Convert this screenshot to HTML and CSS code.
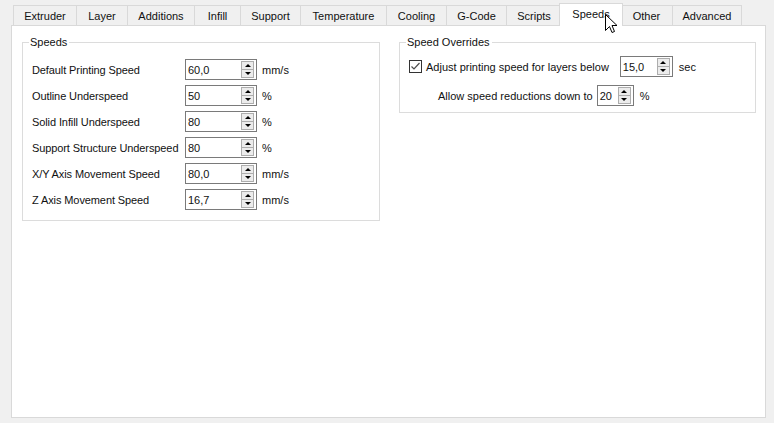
FILE: index.html
```html
<!DOCTYPE html>
<html>
<head>
<meta charset="utf-8">
<link rel="stylesheet" href="styles.css">
</head>
<body>
<div class="window">
  <div class="tabbar">
    <div class="tab w-extruder">Extruder</div>
    <div class="tab w-layer">Layer</div>
    <div class="tab w-additions">Additions</div>
    <div class="tab w-infill">Infill</div>
    <div class="tab w-support">Support</div>
    <div class="tab w-temperature">Temperature</div>
    <div class="tab w-cooling">Cooling</div>
    <div class="tab w-gcode">G-Code</div>
    <div class="tab w-scripts">Scripts</div>
    <div class="tab tab-active w-speeds">Speeds</div>
    <div class="tab w-other">Other</div>
    <div class="tab w-advanced">Advanced</div>
  </div>
  <div class="pane">
    <fieldset class="group group-left">
      <legend>Speeds</legend>
      <div class="form-grid">
        <span class="label">Default Printing Speed</span>
        <div class="spin spin-wide"><span class="value">60,0</span><span class="spin-btn"><span class="arrow-up"></span><span class="arrow-down"></span></span></div>
        <span class="unit">mm/s</span>

        <span class="label">Outline Underspeed</span>
        <div class="spin spin-wide"><span class="value">50</span><span class="spin-btn"><span class="arrow-up"></span><span class="arrow-down"></span></span></div>
        <span class="unit">%</span>

        <span class="label">Solid Infill Underspeed</span>
        <div class="spin spin-wide"><span class="value">80</span><span class="spin-btn"><span class="arrow-up"></span><span class="arrow-down"></span></span></div>
        <span class="unit">%</span>

        <span class="label">Support Structure Underspeed</span>
        <div class="spin spin-wide"><span class="value">80</span><span class="spin-btn"><span class="arrow-up"></span><span class="arrow-down"></span></span></div>
        <span class="unit">%</span>

        <span class="label">X/Y Axis Movement Speed</span>
        <div class="spin spin-wide"><span class="value">80,0</span><span class="spin-btn"><span class="arrow-up"></span><span class="arrow-down"></span></span></div>
        <span class="unit">mm/s</span>

        <span class="label">Z Axis Movement Speed</span>
        <div class="spin spin-wide"><span class="value">16,7</span><span class="spin-btn"><span class="arrow-up"></span><span class="arrow-down"></span></span></div>
        <span class="unit">mm/s</span>
      </div>
    </fieldset>
    <fieldset class="group group-right">
      <legend>Speed Overrides</legend>
      <div class="override-row">
        <span class="checkbox">
          <svg width="11" height="11" viewBox="0 0 11 11"><path d="M1.5 5.5 L4 8 L9.5 2" fill="none" stroke="#4d4d4d" stroke-width="1.2"/></svg>
        </span>
        <span class="check-label">Adjust printing speed for layers below</span>
        <div class="spin spin-mid"><span class="value">15,0</span><span class="spin-btn"><span class="arrow-up"></span><span class="arrow-down"></span></span></div>
        <span class="unit">sec</span>
      </div>
      <div class="override-row row-indent">
        <span class="check-label">Allow speed reductions down to</span>
        <div class="spin spin-small"><span class="value">20</span><span class="spin-btn"><span class="arrow-up"></span><span class="arrow-down"></span></span></div>
        <span class="unit">%</span>
      </div>
    </fieldset>
  </div>
  <svg class="cursor" width="13" height="21" viewBox="0 0 13 21">
    <path d="M0.5 0.5 L0.5 16.5 L4.5 12.5 L7 18.5 L9.5 17.5 L7 11.5 L12 11.5 Z" fill="#ffffff" stroke="#000000" stroke-width="1" stroke-linejoin="miter"/>
  </svg>
</div>
</body>
</html>
```
FILE: styles.css
```css
* { box-sizing: border-box; }
html, body { margin: 0; padding: 0; }
body {
  background: #f0f0f0;
  font-family: "Liberation Sans", Arial, sans-serif;
  font-size: 11px;
  color: #111;
  width: 774px;
  height: 423px;
  overflow: hidden;
}
.window {
  position: relative;
  width: 774px;
  height: 423px;
  padding: 5px 0 0 11px;
}
.tabbar {
  display: flex;
  height: 20px;
  padding-left: 2px;
  align-items: flex-end;
  position: relative;
  z-index: 2;
}
.tab {
  height: 20px;
  border: 1px solid #d9d9d9;
  border-bottom: none;
  border-right: none;
  background: #f0f0f0;
  display: flex;
  align-items: center;
  justify-content: center;
}
.tab:last-child { border-right: 1px solid #d9d9d9; }
.tab-active {
  background: #ffffff;
  height: 23px;
  margin: 0 -2px -1px -2px;
  border-right: 1px solid #d9d9d9;
  padding-bottom: 2px;
  position: relative;
  z-index: 3;
}
.tab-active + .tab { border-left: none; }
.w-extruder { width: 63px; }
.w-layer { width: 51px; }
.w-additions { width: 67px; }
.w-infill { width: 46px; }
.w-support { width: 60px; }
.w-temperature { width: 86px; }
.w-cooling { width: 60px; }
.w-gcode { width: 60px; }
.w-scripts { width: 55px; }
.w-speeds { width: 64px; }
.w-other { width: 51px; }
.w-advanced { width: 70px; }
.pane {
  width: 755px;
  height: 393px;
  background: #ffffff;
  border: 1px solid #d9d9d9;
  display: flex;
  align-items: flex-start;
  gap: 19px;
  padding: 10px 0 0 10px;
  position: relative;
  z-index: 1;
}
.group {
  border: 1px solid #dcdcdc;
  margin: 0;
  padding: 0 9px;
  min-width: 0;
}
.group legend {
  padding: 0 2px 0 1px;
  margin-left: -3px;
  line-height: 13px;
}
.group-left {
  width: 358px;
  height: 185px;
  padding-top: 10px;
}
.group-right {
  width: 357px;
  height: 77px;
  padding-top: 7px;
}
.form-grid {
  display: grid;
  grid-template-columns: 148px 72px auto;
  column-gap: 5px;
  row-gap: 5px;
  align-items: center;
}
.label, .unit, .check-label { white-space: nowrap; }
.label { letter-spacing: -0.1px; }
.spin {
  height: 21px;
  border: 1px solid #7a7a7a;
  background: #fff;
  display: flex;
  align-items: center;
  justify-content: space-between;
  padding: 0 2px 0 2px;
}
.spin-wide { width: 72px; }
.spin-mid { width: 53px; }
.spin-small { width: 37px; }
.spin-btn {
  width: 13px;
  height: 17px;
  border: 1px solid #adadad;
  background: #ececec;
  display: flex;
  flex-direction: column;
  align-items: center;
  justify-content: space-around;
  position: relative;
}
.spin-btn::after {
  content: "";
  position: absolute;
  left: 0; right: 0; top: 7px;
  height: 1px;
  background: #adadad;
}
.arrow-up, .arrow-down {
  width: 0; height: 0;
  border-left: 3px solid transparent;
  border-right: 3px solid transparent;
}
.arrow-up { border-bottom: 3px solid #000; }
.arrow-down { border-top: 3px solid #000; }
.override-row {
  display: flex;
  align-items: center;
  height: 21px;
}
.override-row + .override-row { margin-top: 8px; }
.row-indent { padding-left: 29px; }
.checkbox {
  width: 13px;
  height: 13px;
  border: 1px solid #333;
  background: #fff;
  display: flex;
  align-items: center;
  justify-content: center;
  margin-right: 4px;
}
.group-right .check-label { margin-right: 11px; }
.row-indent .check-label { margin-right: 4px; }
.group-right .unit { margin-left: 6px; }
.cursor {
  position: absolute;
  left: 605px;
  top: 14px;
  z-index: 10;
}
```
